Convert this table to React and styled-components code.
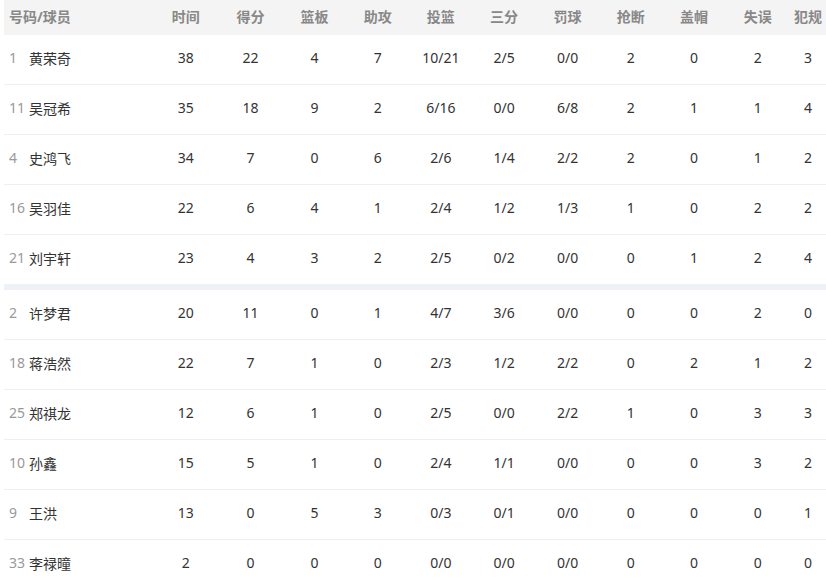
import styled, { createGlobalStyle } from 'styled-components';

const GlobalStyle = createGlobalStyle`
  html, body {
    margin: 0;
    padding: 0;
    background: #fff;
  }
  body {
    font-family: "Noto Sans", "Noto Sans CJK SC", sans-serif;
    overflow: hidden;
  }
`;

const columns = ['时间', '得分', '篮板', '助攻', '投篮', '三分', '罚球', '抢断', '盖帽', '失误', '犯规'];

const starters = [
  ['1', '黄荣奇', 38, 22, 4, 7, '10/21', '2/5', '0/0', 2, 0, 2, 3],
  ['11', '吴冠希', 35, 18, 9, 2, '6/16', '0/0', '6/8', 2, 1, 1, 4],
  ['4', '史鸿飞', 34, 7, 0, 6, '2/6', '1/4', '2/2', 2, 0, 1, 2],
  ['16', '吴羽佳', 22, 6, 4, 1, '2/4', '1/2', '1/3', 1, 0, 2, 2],
  ['21', '刘宇轩', 23, 4, 3, 2, '2/5', '0/2', '0/0', 0, 1, 2, 4],
];

const bench = [
  ['2', '许梦君', 20, 11, 0, 1, '4/7', '3/6', '0/0', 0, 0, 2, 0],
  ['18', '蒋浩然', 22, 7, 1, 0, '2/3', '1/2', '2/2', 0, 2, 1, 2],
  ['25', '郑祺龙', 12, 6, 1, 0, '2/5', '0/0', '2/2', 1, 0, 3, 3],
  ['10', '孙鑫', 15, 5, 1, 0, '2/4', '1/1', '0/0', 0, 0, 3, 2],
  ['9', '王洪', 13, 0, 5, 3, '0/3', '0/1', '0/0', 0, 0, 0, 1],
  ['33', '李禄曈', 2, 0, 0, 0, '0/0', '0/0', '0/0', 0, 0, 0, 0],
];

const Table = styled.div`
  padding-left: 4px;
  width: 822px;
`;

const Row = styled.div`
  display: grid;
  grid-template-columns: 149.3px 65px 64.5px 63.5px 63px 63px 63.5px 63.5px 63px 63.5px 64px 1fr;
  align-items: center;
  box-sizing: border-box;
  height: ${(p) => (p.$head ? '35px' : p.$last ? '49px' : '50px')};
  padding-bottom: 4px;
  background: ${(p) => (p.$head ? '#f4f4f4' : '#fff')};
  border-bottom: ${(p) => (p.$head || p.$last ? 'none' : '1px solid #edf0f3')};
  font-size: 14px;
  color: ${(p) => (p.$head ? '#888' : '#333')};
  font-weight: ${(p) => (p.$head ? 700 : 400)};
`;

const Divider = styled.div`
  height: 6px;
  background: #eef2f6;
`;

const Player = styled.div`
  display: flex;
  align-items: center;
  padding-left: 5px;
  white-space: nowrap;
`;

const Num = styled.span`
  width: 20px;
  color: #999;
`;

const Cell = styled.div`
  text-align: center;
  white-space: nowrap;
`;

const PlayerRow = ({ data, last }) => {
  const [num, name, ...stats] = data;
  return (
    <Row $last={last}>
      <Player>
        <Num>{num}</Num>
        <span>{name}</span>
      </Player>
      {stats.map((v, i) => (
        <Cell key={i}>{v}</Cell>
      ))}
    </Row>
  );
};

export default function App() {
  return (
    <>
      <GlobalStyle />
      <Table>
        <Row $head>
          <Player>号码/球员</Player>
          {columns.map((c) => (
            <Cell key={c}>{c}</Cell>
          ))}
        </Row>
        {starters.map((r, i) => (
          <PlayerRow key={r[0]} data={r} last={i === starters.length - 1} />
        ))}
        <Divider />
        {bench.map((r) => (
          <PlayerRow key={r[0]} data={r} />
        ))}
      </Table>
    </>
  );
}
